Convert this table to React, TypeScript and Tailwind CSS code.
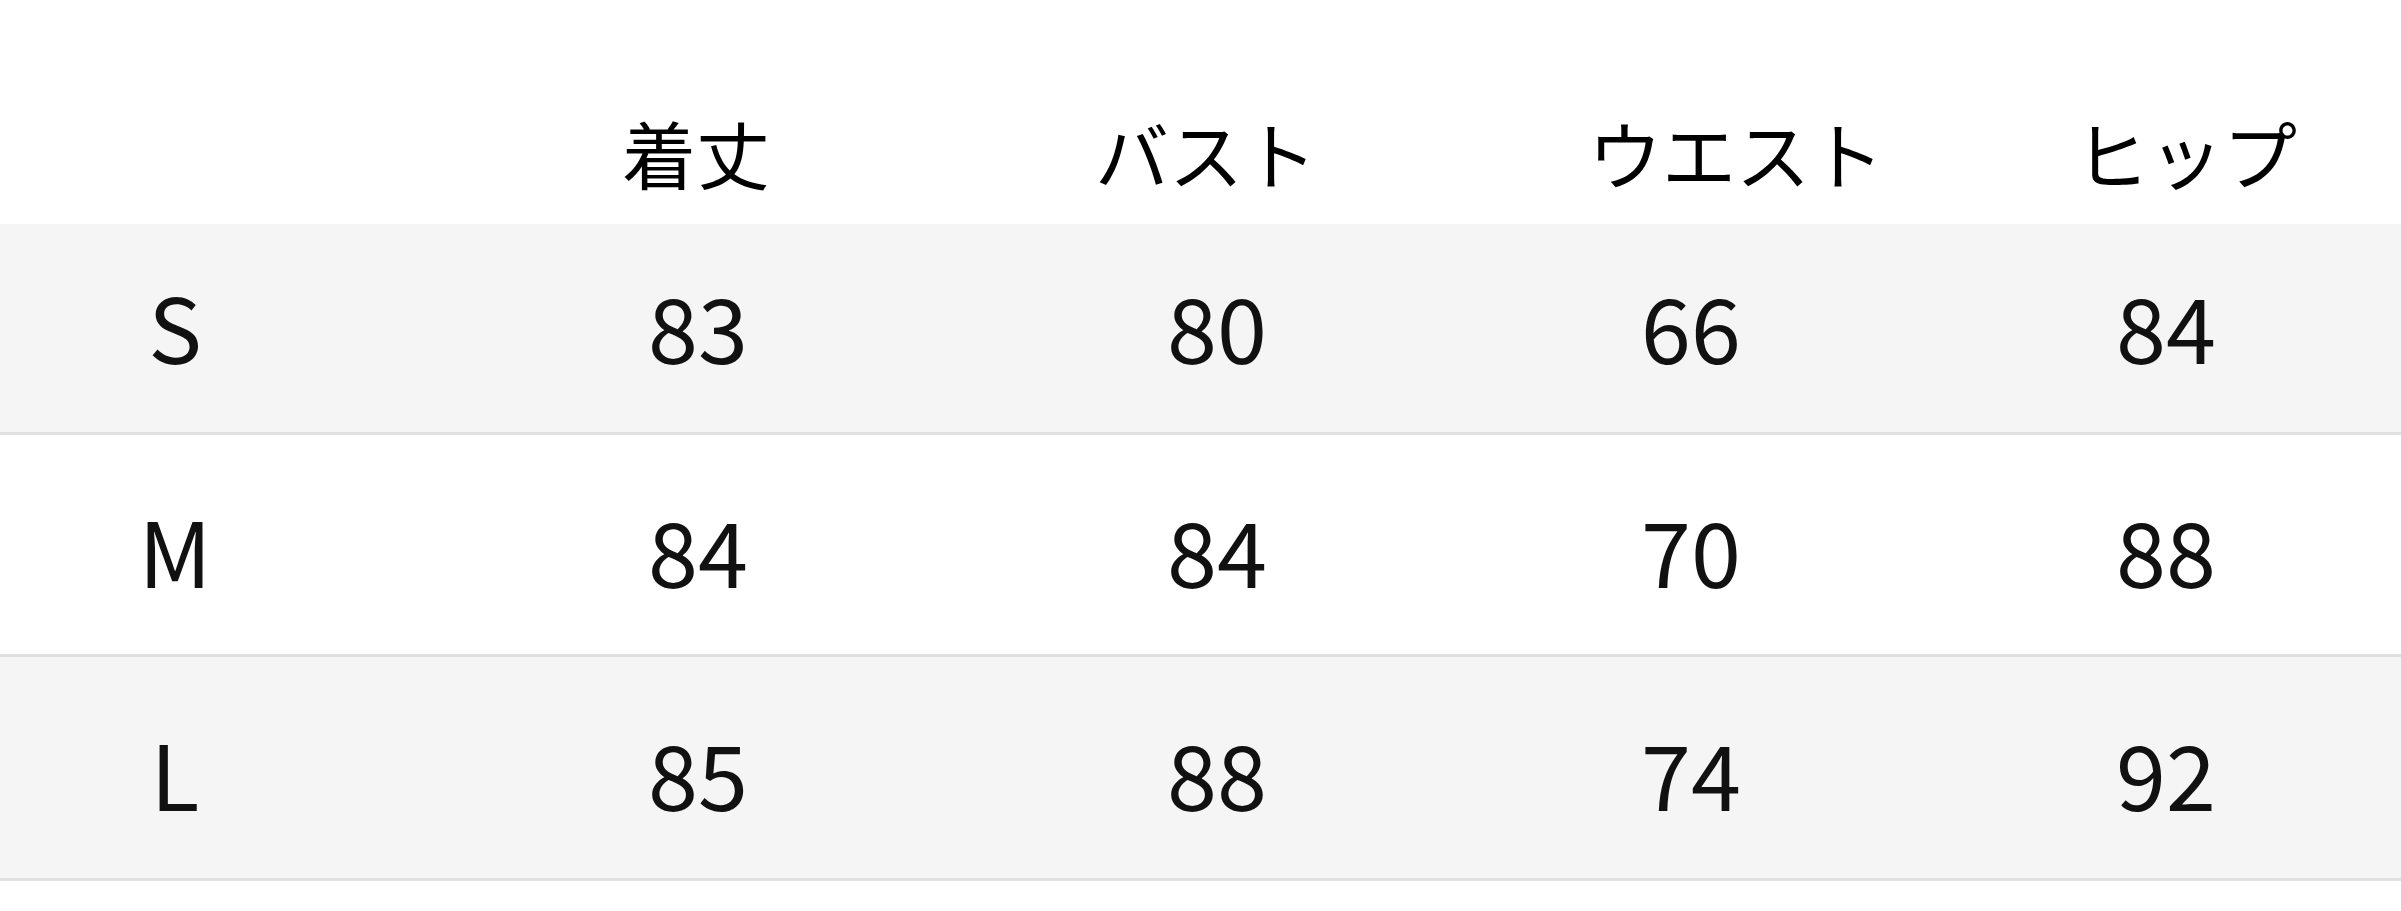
const HEADERS = [
  { label: '着丈', cls: 'ml-[546px]' },
  { label: 'バスト', cls: 'ml-[210px]' },
  { label: 'ウエスト', cls: 'ml-[230px]' },
  { label: 'ヒップ', cls: 'ml-[150px]' },
];

const CELL_OFFSETS = ['ml-[75px]', 'ml-[323px]', 'ml-[319px]', 'ml-[274px]', 'ml-[275px]'];

const ROWS = [
  { size: 'S', values: ['83', '80', '66', '84'], row: 'h-[211px] bg-[#f5f5f5] pb-[6px]' },
  { size: 'M', values: ['84', '84', '70', '88'], row: 'h-[222px] bg-white pt-[8px]' },
  { size: 'L', values: ['85', '88', '74', '92'], row: 'h-[224px] bg-[#f5f5f5] pt-[8px]' },
];

export default function App() {
  return (
    <div className="w-[2401px] h-[911px] bg-white text-black font-['Noto_Sans_CJK_JP',sans-serif] overflow-hidden">
      <div className="h-[224px] flex items-center pt-[80px]">
        {HEADERS.map((h) => (
          <div key={h.label} className={`w-[300px] text-center text-[74px] leading-none ${h.cls}`}>
            {h.label}
          </div>
        ))}
      </div>

      {ROWS.map((r) => (
        <div key={r.size} className={`flex items-center border-b-[3px] border-[#e0e0e0] ${r.row}`}>
          {[r.size, ...r.values].map((v, i) => (
            <div key={i} className={`w-[200px] text-center text-[90px] leading-none text-[#111] ${CELL_OFFSETS[i]}`}>
              {v}
            </div>
          ))}
        </div>
      ))}
    </div>
  );
}
